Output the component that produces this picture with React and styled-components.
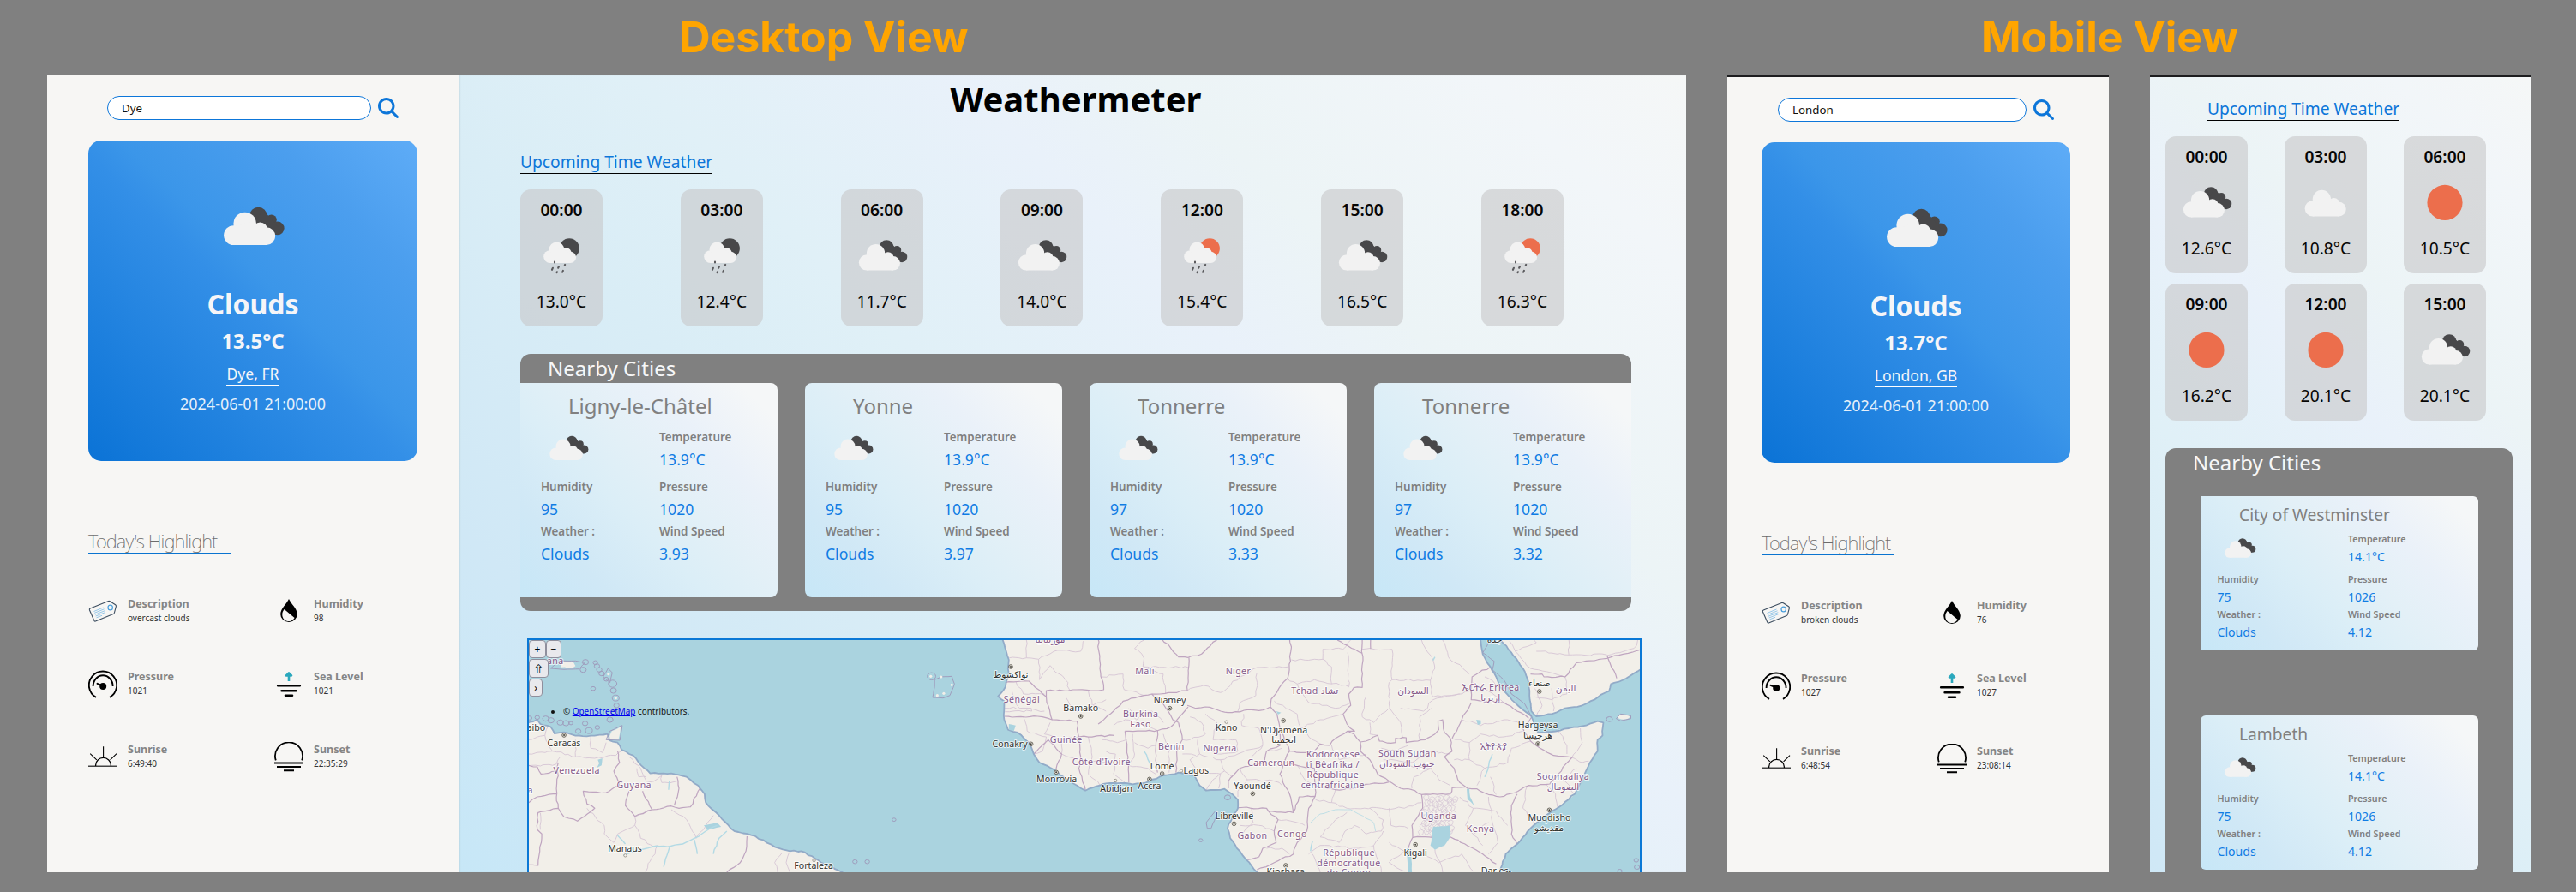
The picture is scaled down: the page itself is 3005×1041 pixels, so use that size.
import React from 'react';
import styled, { createGlobalStyle, css } from 'styled-components';
import { FaMagnifyingGlass } from 'react-icons/fa6';

const blue = '#0d76d9';
const sans = "'Noto Sans', 'Open Sans', 'DejaVu Sans', sans-serif";

const GlobalStyle = createGlobalStyle`
  * { box-sizing: border-box; }
  body { margin: 0; background: #808080; font-family: ${sans}; }
  h1, h2, h3, p { margin: 0; font-weight: 400; }
`;

const Board = styled.div`
  width: 3005px;
  height: 1041px;
  background: #808080;
  overflow: hidden;
`;

const HeadingRow = styled.header`
  display: grid;
  grid-template-columns: 1912px 1088px;
  padding-left: 5px;
  height: 88px;
`;

const ViewHeading = styled.h1`
  font: 700 50px/86px Inter, sans-serif;
  color: #ffa500;
  text-align: center;
  white-space: nowrap;
`;

const Screens = styled.div`
  display: flex;
  height: 930px;
  padding-left: 55px;
`;

const DesktopScreen = styled.section`
  display: flex;
  width: 1912px;
  height: 930px;
  overflow: hidden;
`;

const MobileScreen = styled.section`
  width: 445px;
  height: 930px;
  margin-left: 48px;
  overflow: hidden;
  border-top: 2px solid #1d1d1f;
`;

const Sidebar = styled.aside`
  width: ${(p) => (p.$mobile ? 445 : 480)}px;
  height: 930px;
  padding: 24px ${(p) => (p.$mobile ? '45px 0 40px' : '48px 0')};
  background: #f7f6f4;
  flex: none;
`;

const SearchBar = styled.div`
  display: flex;
  align-items: center;
  gap: 8px;
  height: 28px;
  padding-left: ${(p) => (p.$mobile ? 19 : 22)}px;
  color: ${blue};
  font-size: 24px;
`;

const SearchBox = styled.div`
  width: ${(p) => (p.$mobile ? 290 : 308)}px;
  height: 28px;
  padding-left: 16px;
  border: 1px solid ${blue};
  border-radius: 14px;
  background: #fff;
  color: #111;
  font-size: 13.3px;
  line-height: 26px;
`;

const CurrentCard = styled.div`
  display: flex;
  flex-direction: column;
  align-items: center;
  height: 374px;
  margin-top: 24px;
  padding-top: 50px;
  border-radius: 15px;
  color: #f5f5f8;
  background: linear-gradient(to top right, #0b73d6, #338fe7 48%, #3b96e9 55%, #4b9eee 78%, #5eacf7);
`;

const Condition = styled.p`
  margin-top: 19px;
  font-size: 32px;
  font-weight: 700;
  line-height: 43px;
`;

const Temperature = styled.p`
  margin-top: 5px;
  font-size: 24px;
  font-weight: 700;
  line-height: 33px;
`;

const Place = styled.p`
  margin-top: 10px;
  padding-bottom: 1px;
  font-size: 17.6px;
  line-height: 24px;
  border-bottom: 1px solid #fff;
`;

const Stamp = styled.p`
  margin-top: 9px;
  font-size: 18px;
  line-height: 24px;
  color: #e6f0fa;
`;

const HighlightTitle = styled.h2`
  width: ${(p) => (p.$mobile ? 155 : 167)}px;
  height: 30px;
  margin-top: 78px;
  border-bottom: 1px solid #0a74d0;
  color: #6c6c6c;
  font-size: 22px;
  font-weight: 200;
  letter-spacing: -0.9px;
  line-height: 30px;
  white-space: nowrap;
`;

const HighlightGrid = styled.div`
  display: grid;
  grid-template-columns: ${(p) => (p.$mobile ? 205 : 217)}px 1fr;
  row-gap: 51px;
  margin-top: 50px;
`;

const Highlight = styled.div`
  display: flex;
  gap: 12px;
  height: 34px;
  white-space: nowrap;
`;

const HighlightLabel = styled.p`
  color: #858585;
  font-size: 12.5px;
  font-weight: 700;
  line-height: 17px;
`;

const HighlightValue = styled.p`
  margin-top: 1px;
  color: #333;
  font-size: 10px;
  line-height: 14px;
`;

const skyStops = '#c7e7f7, #d0e8f6 17%, #d9edf6 36%, #e0f0f7 48%, #e9f1fa 64%, #ecf4f6 74%, #f2f6f9 90%, #f5f7f7';

const Main = styled.main`
  flex: 1;
  height: 930px;
  padding-left: 72px;
  background: linear-gradient(45deg, ${skyStops});
  box-shadow: inset 2px 0 2px -1px #a9bdc6;
`;

const MobileMain = styled.main`
  height: 930px;
  padding: 23px 22px 0 18px;
  background: linear-gradient(45deg, ${skyStops}) 0 0 / 100% 1170px no-repeat;
`;

const AppTitle = styled.h1`
  padding-right: 64px;
  text-align: center;
  font-size: 40px;
  font-weight: 700;
  line-height: 55px;
  height: 54px;
`;

const UpcomingTitle = styled.h2`
  width: max-content;
  margin: ${(p) => (p.$mobile ? '0 0 18px 49px' : '33px 0 18px')};
  border-bottom: 1px solid #000;
  color: ${blue};
  font-size: 19.2px;
  line-height: 27px;
`;

const Hours = styled.div`
  display: grid;
  grid-template-columns: repeat(${(p) => (p.$mobile ? 3 : 7)}, 96px);
  justify-content: space-between;
  row-gap: 12px;
  width: ${(p) => (p.$mobile ? 374 : 1217)}px;
`;

const HourCard = styled.div`
  display: flex;
  flex-direction: column;
  align-items: center;
  height: 160px;
  padding-top: 10px;
  border-radius: 12px;
  background: rgba(200, 200, 201, 0.62);
  font-size: 19.2px;
  line-height: 27px;
  color: #060606;
`;

const HourTime = styled.p`
  font-weight: 600;
`;

const Nearby = styled.section`
  width: ${(p) => (p.$mobile ? 405 : 1296)}px;
  height: ${(p) => (p.$mobile ? 620 : 300)}px;
  margin-top: 32px;
  border-radius: 12px;
  background: #808080;
`;

const NearbyTitle = styled.h2`
  height: 34px;
  padding-left: 32px;
  color: #f7f7f7;
  font-size: 24px;
  line-height: 33px;
`;

const Cities = styled.div`
  display: flex;
  gap: 32px;
  ${(p) =>
    p.$mobile &&
    css`
      flex-direction: column;
      gap: 76px;
      padding: 22px 40px 0 41px;
    `}
`;

const CityCard = styled.article`
  flex: none;
  width: ${(p) => (p.$mobile ? 324 : 300)}px;
  height: ${(p) => (p.$mobile ? 180 : 250)}px;
  padding: ${(p) => (p.$mobile ? '8px 0 0 19.5px' : '10px 0 0 24px')};
  border-radius: ${(p) => p.$radius};
  background: linear-gradient(45deg, #c7e7f7, #d0e8f6 20%, #dbeef7 40%, #e3f0f7 56%, #eaf1f9 72%, #f5f7f8 92%);
`;

const CityName = styled.h3`
  padding-left: ${(p) => (p.$mobile ? 25.5 : 32)}px;
  color: #808080;
  font-size: ${(p) => (p.$mobile ? 19.2 : 24)}px;
  line-height: ${(p) => (p.$mobile ? 27 : 33)}px;
  height: ${(p) => (p.$mobile ? 27 : 34)}px;
`;

const CityGrid = styled.div`
  display: grid;
  grid-template-columns: ${(p) => (p.$mobile ? 152.5 : 138)}px 1fr;
  grid-template-rows: 6.3em 4.8em 4.8em;
  row-gap: 0.4em;
  align-items: start;
  font-size: ${(p) => (p.$mobile ? 8 : 10)}px;
`;

const MetricCell = styled.div`
  padding-top: ${(p) => (p.$lowered ? '0.9em' : 0)};
`;

const MetricLabel = styled.p`
  color: #808080;
  font-size: 1.34em;
  font-weight: 600;
  line-height: calc(20em / 13.4);
`;

const MetricValue = styled.p`
  margin-top: calc(4em / 17.6);
  color: #107ce4;
  font-size: 1.76em;
  line-height: calc(24em / 17.6);
`;

const MapFrame = styled.div`
  position: relative;
  width: 1300px;
  height: 400px;
  margin: 32px 0 0 8px;
  border: 2px solid #0a78d6;
  background: #aad3df;
  overflow: hidden;
`;

const MapControls = styled.div`
  position: absolute;
  left: 0;
  top: 0;
  display: flex;
  flex-wrap: wrap;
  align-content: flex-start;
  width: 38px;
  row-gap: 1px;
`;

const MapButton = styled.button`
  width: ${(p) => p.$w}px;
  height: ${(p) => p.$h}px;
  margin-right: ${(p) => p.$gap || 0}px;
  padding: 0;
  border: 1px solid #8f8f9d;
  border-radius: 4px;
  background: #e9e9ed;
  color: #000;
  font: ${(p) => p.$size || 12}px/16px ${sans};
`;

const Attribution = styled.ul`
  position: absolute;
  left: 40px;
  top: 76px;
  margin: 0;
  padding: 0;
  color: #111;
  font-size: 9.9px;
  line-height: 14px;
  white-space: nowrap;
  a { color: #0000ee; }
`;

const MapSvg = styled.svg`
  display: block;
  text {
    font-family: 'Noto Sans', 'DejaVu Sans', 'Noto Sans Ethiopic', sans-serif;
    text-anchor: middle;
    paint-order: stroke;
    stroke: rgba(255, 255, 255, 0.7);
    stroke-width: 2px;
    stroke-linejoin: round;
  }
`;

/* ---------- weather icons ---------- */

const WhiteCloud = () => (
  <g fill="#f2f2f2">
    <circle cx="27.5" cy="60.6" r="11.4" />
    <circle cx="40.7" cy="47" r="13.3" />
    <circle cx="58.5" cy="54" r="8.6" />
    <circle cx="65.8" cy="61.6" r="10.4" />
    <path d="M27.5 72H66V58L50 44L30 50Z" />
  </g>
);

const RainCloud = ({ disc }) => (
  <>
    <circle cx="61.5" cy="40" r="14.6" fill={disc} />
    <g fill="#f2f2f2">
      <circle cx="33.3" cy="52" r="9.3" />
      <circle cx="43" cy="41.5" r="11" />
      <circle cx="57" cy="46.5" r="7.5" />
      <circle cx="63" cy="53" r="8.3" />
      <path d="M33 61.2H63V48L50 38L34 46Z" />
    </g>
    <g stroke="#5a5a5d" strokeWidth="2.6" strokeLinecap="round">
      <path d="M40 59.5v1.2M55.2 63.6l-.5 1.2M46.2 66.2l-1 2.2M37.4 68.4l-1.2 2.6M52.4 72.4l-1 2.2M43.6 74l-.4 1.2" />
    </g>
  </>
);

const WeatherIcon = ({ kind, size }) => (
  <svg width={size} height={size} viewBox="0 0 100 100">
    {kind === 'clouds' && (
      <>
        <g fill="#48484a">
          <circle cx="56.4" cy="38" r="10.3" />
          <circle cx="71.6" cy="42.6" r="6.2" />
          <circle cx="78.8" cy="52.4" r="7.8" />
          <path d="M62 31L72 42L80 52L78 60L50 48Z" />
        </g>
        <WhiteCloud />
      </>
    )}
    {kind === 'cloud' && (
      <g transform="translate(3.5 -1.5)">
        <WhiteCloud />
      </g>
    )}
    {kind === 'rainNight' && <RainCloud disc="#48484a" />}
    {kind === 'rainDay' && <RainCloud disc="#ec6e4c" />}
    {kind === 'sun' && <circle cx="50" cy="50.5" r="25.7" fill="#ec6e4c" />}
  </svg>
);

/* ---------- highlight icons, 34 x 34 ---------- */

const TagIcon = () => (
  <svg width="34" height="34" viewBox="0 0 34 34" fill="none">
    <path d="M1.4 15.8Q1 14.6 2.2 14.1L23.5 5.5Q24.5 5.2 25.4 5.8L31.6 9.8Q32.6 10.6 32.4 11.6L30.4 19.2Q30.1 20.2 29.2 20.6L8.4 29Q7.2 29.4 6.8 28.2Z" stroke="#3d4e60" strokeWidth="1.1" />
    <ellipse cx="25.7" cy="13" rx="2.7" ry="2.9" stroke="#4a9fdc" strokeWidth="1.2" />
    <path d="M6.5 17.5L17.5 13M7.2 19.3L18.5 14.8M8 21.2L19.3 16.7M8.7 23L20 18.5M9.5 24.8L16 22.3" stroke="#7ebbe6" strokeWidth=".8" />
  </svg>
);

const DropIcon = () => (
  <svg width="34" height="34" viewBox="0 0 34 34">
    <path d="M17 3C14.5 8.5 7.2 14.5 7.2 20.7A9.8 9.4 0 0 0 26.8 20.7C26.8 14.5 19.5 8.5 17 3Z" />
    <path d="M11.6 14.9L23.6 25A7.6 7.4 0 0 1 9.3 20.7C9.3 18.6 10.3 16.8 11.6 14.9Z" fill="#f7f6f4" />
  </svg>
);

const GaugeIcon = () => (
  <svg width="34" height="34" viewBox="0 0 34 34" fill="none" stroke="#000">
    <path d="M9 32.8A16.2 16.2 0 1 1 25 32.8" strokeWidth="1.9" />
    <path d="M5.6 20A11.4 12.6 0 1 1 28.6 20" strokeWidth="1.9" />
    <circle cx="17.2" cy="20" r="4" fill="#000" stroke="none" />
    <path d="M10.5 16.8L17 19.5" strokeWidth="2" strokeLinecap="round" />
  </svg>
);

const SeaIcon = () => (
  <svg width="34" height="34" viewBox="0 0 34 34" strokeLinecap="round">
    <path d="M17 14V5M14 7.4L17 4.4L20 7.4Z" stroke="#2ba8bd" strokeWidth="2.6" fill="#2ba8bd" strokeLinejoin="round" strokeLinecap="butt" />
    <path d="M4.2 19.3H29.8M8.6 25.2H25.4M13 30.7H21" stroke="#000" strokeWidth="2.6" />
  </svg>
);

const SunriseIcon = () => (
  <svg width="34" height="34" viewBox="0 0 34 34" fill="none" stroke="#000">
    <path d="M0 28.3H34" strokeWidth="1.6" stroke="#444" />
    <path d="M8.6 28V27A8.9 8.6 0 0 1 26.4 27V28" strokeWidth="1.3" />
    <path d="M17.6 5.3V18M2.2 13.6L9.8 20.8M33 13.6L25.6 20.8" strokeWidth="1.1" />
  </svg>
);

const SunsetIcon = () => (
  <svg width="34" height="35" viewBox="0 0 34 35" fill="none" stroke="#000" strokeWidth="1.8">
    <path d="M1.8 21.4A16 16 0 1 1 32.2 21.4" />
    <path d="M0 24.6H34M3 29H31M11 33.2H23" strokeWidth="2" />
  </svg>
);

const highlightIcons = [TagIcon, DropIcon, GaugeIcon, SeaIcon, SunriseIcon, SunsetIcon];
const highlightLabels = ['Description', 'Humidity', 'Pressure', 'Sea Level', 'Sunrise', 'Sunset'];

/* ---------- map ---------- */

// The map is kept as two sheets, Atlantic (W) and Africa (E), sharing one scale.
const sheets = { W: -17, E: 673 };
const SX = 1 / 2.24;
const SY = 1 / 3;
const px = (sheet, x, y) => [x * SX + sheets[sheet], y * SY - 17];

const parse = (sheet, str) => {
  const n = str.trim().split(/[\s,]+/).map(Number);
  const out = [];
  for (let i = 0; i < n.length; i += 2) out.push(px(sheet, n[i], n[i + 1]));
  return out;
};

// Subdivides each segment and nudges the midpoints for a natural boundary.
const rough = (pts, amount, closed) => {
  let seed = Math.round(pts[0][0] * 7 + pts[0][1] * 13) + 1;
  const rnd = () => {
    seed = (seed * 16807 + 11) % 2147483647;
    return (seed % 1000) / 1000 - 0.5;
  };
  let d = `M${pts[0][0].toFixed(1)} ${pts[0][1].toFixed(1)}`;
  for (let i = 1; i < pts.length; i++) {
    const [x0, y0] = pts[i - 1];
    const [x1, y1] = pts[i];
    const len = Math.hypot(x1 - x0, y1 - y0);
    const steps = Math.max(1, Math.round(len / 5));
    for (let s = 1; s < steps; s++) {
      const t = s / steps;
      d += `L${(x0 + (x1 - x0) * t + rnd() * amount).toFixed(1)} ${(y0 + (y1 - y0) * t + rnd() * amount).toFixed(1)}`;
    }
    d += `L${x1.toFixed(1)} ${y1.toFixed(1)}`;
  }
  return d + (closed ? 'Z' : '');
};

const saCoast = '30 345 60 330 68 345 95 355 105 378 130 374 160 386 200 386 243 380 248 402 270 410 280 435 310 455 325 480 355 518 410 518 450 530 480 560 497 590 500 620 535 665 575 720 630 738 680 775 720 790 750 790 785 815 810 835 857 864 870 880';
const waCoast = '1272 40 1285 90 1292 120 1290 180 1283 215 1264 248 1280 265 1280 330 1290 365 1315 375 1345 410 1357 450 1372 480 1410 505 1435 530 1470 560 1492 578 1530 560 1546 553';
const gulfCoast = '0 553 40 552 70 556 100 552 140 530 190 515 230 525 245 560 262 578 310 572 330 590 345 610 345 640 330 675 318 710 325 745 350 790 375 830 395 864 400 880';
const eastCoast = '1030 880 1032 850 1045 800 1075 765 1110 710 1150 665 1185 635 1225 590 1245 540 1265 480 1285 440 1285 400 1298 385 1300 340 1285 335 1255 350 1210 360 1165 372 1130 375 1120 350 1112 318 1085 290 1055 250 1030 215 1020 180 1005 145 985 100 978 40';
const arabia = '1025 40 1060 95 1090 150 1105 200 1108 260 1112 300 1125 318 1165 310 1200 290 1245 280 1315 230 1320 205 1360 185 1400 152';

const nations = [
  ['E', '145 45 170 80 190 110 215 112 250 100 290 51'],
  ['E', '217 112 213 228 175 235 120 240 100 245 45 265 20 300 -20 345'],
  ['E', '120 240 150 275 175 330 190 340'],
  ['E', '213 280 235 290 260 285 300 300 330 305 370 295 400 298 430 285'],
  ['E', '480 45 485 75 475 185 432 258 430 285 447 310'],
  ['E', '605 51 670 97'],
  ['E', '670 45 670 217 648 218 635 240 640 280 620 310 630 345 650 370 632 370 600 395 585 420 560 415 545 440 510 445 480 440'],
  ['E', '632 370 648 380 665 408'],
  ['E', '692 45 692 82'],
  ['E', '665 408 690 400 710 385 715 405 745 412 757 410 757 395 785 393 785 410 815 405 835 400 860 380 870 365 868 335 880 330 885 375 900 395 905 440'],
  ['E', '665 408 665 440 690 470 710 520 740 545 770 570 800 575 825 592 900 590 905 568 940 565'],
  ['E', '905 440 885 460 910 500 925 550 945 570 970 572 1000 592 1030 600 1070 585 1105 560 1160 555 1218 462 1170 455 1135 430 1110 405 1090 360 1112 322'],
  ['E', '1005 145 975 165 957 180 955 260 1040 270 1075 300 1105 325'],
  ['E', '955 270 930 330 905 395'],
  ['E', '1075 590 1060 630 1060 730 1075 765'],
  ['E', '802 742 900 740 985 800 1020 835'],
  ['E', '825 592 828 640 800 700 802 742 790 780 795 870'],
  ['E', '447 310 455 360 455 420 420 440 415 480 350 500 320 545 320 570'],
  ['E', '455 360 480 440 465 480 455 520 480 590 490 655 425 650 420 640 345 638'],
  ['E', '490 655 505 600 547 598 530 640 525 720 500 760 490 800 440 830 395 855'],
  ['E', '425 650 450 680 440 720 445 760 410 780 400 810 370 820'],
  ['E', '465 480 500 490 545 500 548 560 600 575 640 572 690 555 740 548'],
  ['E', '548 560 547 598'],
  ['E', '135 368 130 440 135 515'],
  ['E', '190 340 200 400 185 440 183 515'],
  ['E', '50 370 55 430 60 550'],
  ['E', '50 370 135 368 170 355 215 285'],
  ['E', '1110 170 1140 170 1145 180 1200 180 1230 130 1310 115 1397 85'],
  ['E', '1310 105 1335 185'],
  ['W', '1525 45 1530 150 1540 225 1390 228 1390 250 1345 195 1283 200'],
  ['W', '1390 250 1405 330 1380 320 1280 318'],
  ['W', '1405 330 1470 335 1475 390 1568 385'],
  ['W', '1475 390 1480 460 1475 500 1492 578'],
  ['W', '1357 450 1395 400 1430 450 1415 505'],
  ['W', '38 490 60 495 70 520 110 510'],
  ['W', '270 440 275 480 260 510 275 560 240 585 180 580 190 625 210 640 165 685 130 670 115 640 62 655 60 715 72 730 62 840 38 838'],
  ['W', '115 640 110 600 115 480'],
  ['W', '300 580 290 630 315 668 360 645 335 580'],
  ['W', '360 645 410 632 430 640 460 635 485 570'],
  ['W', '425 530 430 570 418 630'],
  ['W', '38 620 60 600 110 590'],
  ['W', '608 738 605 790 590 830 555 864'],
];

const regions = [
  ['W', '38 400 80 385 100 440 160 460 160 400'],
  ['W', '80 385 90 350'],
  ['W', '160 460 210 465 265 455 280 440'],
  ['W', '200 388 200 430 230 445 240 410'],
  ['W', '38 450 100 440'],
  ['W', '45 490 110 485 120 460'],
  ['W', '315 700 315 670 350 650'],
  ['W', '315 700 270 730 260 760 235 730 235 700 190 640'],
  ['W', '315 700 330 745 365 775 375 770 343 864'],
  ['W', '410 645 450 680 475 745 520 665'],
  ['W', '68 715 68 657'],
  ['W', '718 795 710 830 720 864'],
  ['W', '700 795 680 830 688 864'],
  ['W', '300 460 330 500 345 545 365 545 385 525 385 550 425 545'],
  ['W', '320 500 325 530 345 530'],
  ['W', '1338 51 1338 113 1293 113'],
  ['W', '1338 113 1370 118 1410 90 1480 90 1493 45'],
  ['W', '1370 118 1372 190 1400 140 1440 190 1452 228'],
  ['W', '1310 195 1330 240 1385 240'],
  ['W', '1300 230 1320 290 1385 300'],
  ['W', '1330 320 1340 370 1390 390 1380 440 1357 450'],
  ['W', '1400 340 1385 380 1430 400 1475 390'],
  ['W', '1430 400 1430 450 1470 470'],
  ['W', '1280 290 1350 290 1352 300 1282 302'],
  ['W', '1500 390 1510 460 1500 520 1530 560'],
  ['W', '1440 250 1460 300 1520 280 1546 300'],
  ['W', '1480 470 1546 480'],
  ['W', '1500 230 1510 280 1546 260'],
  ['E', '100 51 75 80 100 115 97 145 217 147'],
  ['E', '97 145 150 170 155 240'],
  ['E', '-10 180 45 170 48 225 100 245'],
  ['E', '475 145 395 147 350 180 300 235 255 210 213 228'],
  ['E', '395 165 392 245 350 270 345 300'],
  ['E', '485 120 567 118 567 83 620 83 640 51'],
  ['E', '475 185 500 205 545 190 635 215 632 95'],
  ['E', '567 118 590 145 590 205'],
  ['E', '500 205 530 270 600 290 640 270'],
  ['E', '440 265 500 310 510 360 560 330 620 310'],
  ['E', '670 83 748 83 748 190 848 192 860 150 855 120 825 51'],
  ['E', '748 190 740 200 742 290 770 340 775 390'],
  ['E', '848 192 855 250 910 245 950 230'],
  ['E', '770 290 830 300 855 260 925 240'],
  ['E', '680 250 670 320 700 340 740 290'],
  ['E', '690 340 690 380 710 385'],
  ['E', '820 400 820 320 850 290'],
  ['E', '880 51 895 110 950 170'],
  ['E', '220 320 250 340 260 380 220 400 200 400'],
  ['E', '260 310 290 340 280 400 340 400 345 440 290 450 270 430'],
  ['E', '360 310 355 350 400 360 410 420 380 460'],
  ['E', '240 400 245 450 220 470 240 510 225 525'],
  ['E', '245 450 300 470 310 510 280 540 262 578'],
  ['E', '300 470 345 450 410 420'],
  ['E', '310 510 330 530'],
  ['E', '200 450 235 455'],
  ['E', '240 510 300 520 295 570'],
  ['E', '350 500 370 540 345 580 345 600'],
  ['E', '370 540 440 545 460 560'],
  ['E', '420 440 460 430'],
  ['E', '70 380 75 450 60 490 110 500 130 520'],
  ['E', '75 410 110 430 130 420'],
  ['E', '20 350 50 330 90 345 135 368'],
  ['E', '60 290 80 330 120 300 150 340'],
  ['E', '150 380 165 420 165 515'],
  ['E', '-10 400 30 410 55 400'],
  ['E', '0 440 25 450 20 520 50 550'],
  ['E', '520 370 540 400 560 415'],
  ['E', '590 420 610 470 680 450'],
  ['E', '500 490 520 540 548 560'],
  ['E', '600 575 590 620 630 640 720 640 780 640 825 620'],
  ['E', '590 620 548 610'],
  ['E', '630 655 600 680 560 740 610 760 625 720 650 700 680 730 720 720 725 680 690 640'],
  ['E', '725 720 700 770 650 780 560 770 530 800'],
  ['E', '740 640 745 700 790 710'],
  ['E', '740 760 780 790 740 830 780 860'],
  ['E', '725 470 800 480 850 440 900 450'],
  ['E', '720 430 760 440 790 420'],
  ['E', '770 490 850 500 870 540 900 560'],
  ['E', '800 570 805 530 850 500'],
  ['E', '905 395 950 410 980 380 1040 390 1090 370'],
  ['E', '930 330 980 350 1040 330 1085 345'],
  ['E', '950 410 950 470 990 500 970 560'],
  ['E', '990 500 1050 480 1060 430 1110 405'],
  ['E', '910 470 950 470'],
  ['E', '1005 530 1020 592'],
  ['E', '960 200 1000 230 1040 270'],
  ['E', '990 180 1030 215'],
  ['E', '1055 55 1070 90 1125 60 1115 45'],
  ['E', '1070 90 1110 150 1200 180'],
  ['E', '1210 103 1310 103'],
  ['E', '1210 51 1210 103 1125 90'],
  ['E', '1310 105 1380 80 1390 51'],
  ['E', '1200 180 1205 240 1165 260 1120 250'],
  ['E', '1165 220 1170 300'],
  ['E', '1120 220 1140 280 1125 318'],
  ['E', '1180 365 1205 420 1205 450'],
  ['E', '1240 360 1245 410 1218 462'],
  ['E', '1218 462 1245 480 1262 475'],
  ['E', '1150 555 1175 590 1180 635'],
  ['E', '1100 565 1090 640 1120 690'],
  ['E', '1230 500 1195 540 1225 590'],
  ['E', '925 600 960 640 940 700 985 770'],
  ['E', '960 640 1020 650 1050 700'],
  ['E', '1000 600 1010 690 1025 760 1000 800'],
  ['E', '1000 690 960 730'],
  ['E', '860 785 880 864'],
  ['E', '830 800 870 830 930 800 960 860'],
  ['E', '350 700 400 700 440 720'],
  ['E', '380 640 385 690 350 740'],
  ['E', '450 680 500 690 520 700'],
  ['E', '420 780 460 780 480 800'],
  ['E', '540 800 560 864'],
  ['E', '700 770 720 864'],
];

const ugandaCells = [];
for (let r = 0; r < 8; r++) {
  for (let c = 0; c < 7; c++) {
    ugandaCells.push([830 + c * 12 - r * 2 + ((r * 5 + c * 3) % 7), 600 + r * 17 + ((c * 7 + r * 3) % 9)]);
  }
}

const islandsW = [
  [186, 128, 8], [180, 155, 8], [212, 130, 6], [216, 142, 7], [222, 155, 7], [228, 168, 7], [240, 188, 6], [257, 204, 11], [206, 221, 6],
  [259, 228, 8], [265, 254, 9], [267, 280, 7], [262, 305, 8], [250, 330, 8], [60, 322, 6], [82, 326, 8], [96, 332, 8], [120, 340, 8],
  [135, 342, 8], [148, 342, 5], [185, 343, 7], [167, 370, 7], [195, 368, 9], [217, 357, 6], [1090, 178, 11], [992, 680, 5], [890, 827, 6],
  [922, 827, 6], [298, 300, 5], [40, 324, 6],
];
const islandsE = [[318, 602, 8], [248, 752, 5], [1316, 328, 8], [1386, 822, 6], [1388, 846, 7], [1343, 860, 6]];

const places = [
  ['W', 107, 134, 'ana', 1], ['W', 163, 518, 'Venezuela', 1], ['W', 313, 569, 'Guyana', 1], ['W', 42, 588, 'a', 1],
  ['W', 1326, 270, 'Sénégal', 1], ['W', 1442, 412, 'Guinée', 1], ['W', 1534, 489, "Côte d'Ivoire", 1], ['W', 1400, 60, 'موريتانيا', 1],
  ['W', 57, 368, 'aibo'], ['W', 130, 422, 'Caracas'], ['W', 289, 793, 'Manaus'], ['W', 782, 853, 'Fortaleza'],
  ['W', 1297, 182, 'نواكشوط'], ['W', 1480, 300, 'Bamako'], ['W', 1295, 425, 'Conakry'], ['W', 1417, 550, 'Monrovia'], ['W', 1573, 583, 'Abidjan'],
  ['E', 102, 170, 'Mali', 1], ['E', 346, 170, 'Niger', 1], ['E', 91, 321, 'Burkina', 1], ['E', 91, 357, 'Faso', 1],
  ['E', 171, 435, 'Bénin', 1], ['E', 298, 442, 'Nigeria', 1], ['E', 546, 239, 'Tchad تشاد', 1], ['E', 803, 240, 'السودان', 1],
  ['E', 1006, 229, 'ኤርትራ Eritrea', 1], ['E', 1005, 265, 'إرتريا', 1], ['E', 1202, 231, 'اليمن', 1], ['E', 1013, 436, 'ኢትዮጵያ', 1],
  ['E', 594, 461, 'Ködörösêse', 1], ['E', 593, 497, 'tî Bêafrîka /', 1], ['E', 593, 533, 'République', 1], ['E', 593, 570, 'centrafricaine', 1],
  ['E', 788, 459, 'South Sudan', 1], ['E', 787, 495, 'جنوب السودان', 1], ['E', 432, 492, 'Cameroun', 1],
  ['E', 1195, 541, 'Soomaaliya', 1], ['E', 1195, 577, 'الصومال', 1], ['E', 870, 677, 'Uganda', 1], ['E', 979, 724, 'Kenya', 1],
  ['E', 383, 746, 'Gabon', 1], ['E', 487, 741, 'Congo', 1], ['E', 635, 806, 'République', 1], ['E', 635, 842, 'démocratique', 1], ['E', 635, 876, 'du Congo', 1],
  ['E', 167, 272, 'Niamey'], ['E', 315, 368, 'Kano'], ['E', 465, 377, "N'Djaména"], ['E', 465, 410, 'انجمينا'],
  ['E', 1133, 213, 'صنعاء'], ['E', 1016, 60, 'جدة'], ['E', 1129, 361, 'Hargeysa'], ['E', 1129, 395, 'هرجيسا'],
  ['E', 147, 503, 'Lomé'], ['E', 236, 520, 'Lagos'], ['E', 114, 574, 'Accra'], ['E', 383, 572, 'Yaoundé'],
  ['E', 1159, 684, 'Muqdisho'], ['E', 1158, 720, 'مقديشو'], ['E', 809, 806, 'Kigali'], ['E', 336, 679, 'Libreville'],
  ['E', 470, 873, 'Kinshasa'], ['E', 1020, 870, 'Dar es-'],
];

const capitals = [
  ['E', 167, 290], ['E', 464, 333], ['E', 147, 519], ['E', 114, 538], ['E', 384, 589], ['E', 335, 694], ['E', 809, 767], ['E', 1133, 231],
  ['E', 1129, 414], ['E', 1159, 646], ['E', 470, 840], ['W', 1297, 144], ['W', 1480, 318], ['W', 1350, 415], ['W', 1416, 514], ['W', 130, 384],
];
const towns = [['E', 315, 338], ['E', 25, 543], ['E', 197, 509], ['W', 290, 805], ['W', 783, 822]];

const shape = (sheet, pts, amount = 1.4) => rough(parse(sheet, pts), amount, true);
const line = (sheet, pts, amount = 1.4) => rough(parse(sheet, pts), amount, false);

const WorldMap = () => (
  <MapSvg width="1296" height="396" viewBox="0 0 1296 396">
    <g fill="#f2efe9">
      <path d={shape('W', saCoast + ' 30 880')} />
      <path d={shape('W', waCoast + ' 1550 553 1550 40')} />
      <path d={shape('E', gulfCoast + ' ' + eastCoast + ' 0 40')} />
      <path d={shape('E', arabia + ' 1400 40')} />
      <path d={shape('W', '122 128 155 130 160 142 150 150 122 146')} />
      <path d={shape('W', '245 400 255 370 278 355 272 400')} />
      <ellipse cx={px('E', 1353, 320)[0]} cy={px('E', 1353, 320)[1]} rx="7" ry="3" />
    </g>
    <g fill="none" stroke="#d6c5d5" strokeWidth="0.9" strokeLinejoin="round">
      {regions.map(([s, p], i) => (
        <path key={i} d={line(s, p, 2.6)} />
      ))}
      {ugandaCells.map(([x, y], i) => {
        const [a, b] = px('E', x, y);
        return <path key={i} d={`M${a} ${b}l3 -3l3.5 2l-1 4l-3.5 1.5z`} strokeWidth="0.7" />;
      })}
    </g>
    <g fill="none" stroke="#bfa5c0" strokeWidth="1.2" strokeLinejoin="round">
      {nations.map(([s, p], i) => (
        <path key={i} d={line(s, p, 1.8)} />
      ))}
    </g>
    <g fill="none" stroke="#92abc8" strokeWidth="1.8" strokeLinejoin="round">
      <path d={line('W', saCoast)} />
      <path d={line('W', waCoast)} />
      <path d={line('E', gulfCoast)} />
      <path d={line('E', eastCoast)} />
      <path d={line('E', arabia)} />
    </g>
    <g fill="none" stroke="#9f9dbd" strokeWidth="1">
      <path d={shape('W', '1098 190 1115 180 1143 178 1150 205 1138 245 1120 254 1093 252 1098 215', 0.4)} />
      <path d={shape('W', '95 150 118 124 160 124 185 130 170 152 130 154', 0.4)} />
      <path d={shape('W', '232 180 245 150 256 165 250 200', 0.4)} />
      <path d={shape('W', '240 400 250 370 282 350 276 402', 0.4)} />
      <path d={shape('E', '265 710 262 690 286 650 292 655 275 710', 0.4)} />
      <path d={shape('E', '1334 326 1345 310 1372 316 1372 326 1345 334', 0.4)} />
      <path d={line('E', '1000 60 985 95 1015 125 1010 155 1040 190 1060 240 1095 275 1112 318', 0.8)} />
      {islandsW.map(([x, y, r], i) => {
        const [a, b] = px('W', x, y);
        return <ellipse key={i} cx={a} cy={b} rx={r * SX} ry={r * SX * 0.85} />;
      })}
      {islandsE.map(([x, y, r], i) => {
        const [a, b] = px('E', x, y);
        return <ellipse key={i} cx={a} cy={b} rx={r * SX} ry={r * SX * 0.8} />;
      })}
    </g>
    <g fill="#f2efe9">
      {[[1088, 178], [1115, 180], [1143, 208], [1122, 238], [1105, 245], [265, 254], [246, 170]].map(([x, y]) => {
        const [a, b] = px('W', x, y);
        return <circle key={x} cx={a} cy={b} r="1.6" />;
      })}
    </g>
    <g fill="#aad3df">
      <path d={shape('E', '855 705 900 700 900 740 885 770 860 785 848 770 852 730')} />
      <path d={shape('E', '943 572 950 572 952 600 962 630 945 608', 0.5)} />
      <path d={shape('E', '968 330 980 332 980 345 972 348', 0.5)} />
      <path d={shape('W', '218 470 230 465 228 490 216 498 222 482', 0.5)} />
      <path d={shape('W', '495 700 530 690 540 705 505 715', 0.5)} />
      <path d={shape('W', '1292 345 1310 350 1305 370 1292 365', 0.5)} />
      <path d={shape('E', '786 780 798 790 800 864 790 864', 0.5)} />
      <path d={shape('E', '445 300 458 305 450 312', 0.5)} />
    </g>
    <g fill="none" stroke="#b3dae5" strokeWidth="1.4">
      <path d={line('W', '530 700 500 720 470 745 440 765 400 775 370 772 330 785 285 805')} />
      <path d={line('W', '405 778 390 845')} />
      <path d={line('W', '555 720 535 745 520 800')} />
      <path d={line('W', '470 750 478 800')} />
      <path d={line('W', '290 765 270 735')} />
      <path d={line('W', '405 545 403 575')} />
      <path d={line('E', '535 690 560 660 600 645 640 645 700 690 705 720')} strokeWidth="0.8" />
      <path d={line('E', '540 755 535 790')} />
      <path d={line('E', '100 440 120 500')} />
      <path d={line('E', '1010 450 990 530')} />
      <path d={line('E', '860 110 855 122')} />
    </g>
    {capitals.map(([s, x, y]) => {
      const [a, b] = px(s, x, y);
      return (
        <g key={x + s}>
          <circle cx={a} cy={b} r="2.3" fill="#e9e5dc" stroke="#5b584f" strokeWidth="0.9" />
          <circle cx={a} cy={b} r="1" fill="#45433c" />
        </g>
      );
    })}
    {towns.map(([s, x, y]) => {
      const [a, b] = px(s, x, y);
      return <circle key={x + s} cx={a} cy={b} r="1.7" fill="#f6f3ee" stroke="#8b887f" strokeWidth="0.8" />;
    })}
    {places.map(([s, x, y, name, country]) => {
      const [a, b] = px(s, x, y);
      return (
        <text key={name + x + y} x={a} y={b} fontSize="10.6" letterSpacing={/[a-z]/.test(name) && country ? 0.4 : 0} fill={country ? '#84598a' : '#33332f'}>
          {name}
        </text>
      );
    })}
  </MapSvg>
);

/* ---------- composed parts ---------- */

const Side = ({ mobile, city, place, temp, values }) => (
  <Sidebar $mobile={mobile}>
    <SearchBar $mobile={mobile}>
      <SearchBox $mobile={mobile}>{city}</SearchBox>
      <FaMagnifyingGlass />
    </SearchBar>
    <CurrentCard>
      <WeatherIcon kind="clouds" size={100} />
      <Condition>Clouds</Condition>
      <Temperature>{temp}</Temperature>
      <Place>{place}</Place>
      <Stamp>2024-06-01 21:00:00</Stamp>
    </CurrentCard>
    <HighlightTitle $mobile={mobile}>Today's Highlight</HighlightTitle>
    <HighlightGrid $mobile={mobile}>
      {highlightLabels.map((label, i) => {
        const Icon = highlightIcons[i];
        return (
          <Highlight key={label}>
            <Icon />
            <div>
              <HighlightLabel>{label}</HighlightLabel>
              <HighlightValue>{values[i]}</HighlightValue>
            </div>
          </Highlight>
        );
      })}
    </HighlightGrid>
  </Sidebar>
);

const HourList = ({ mobile, hours }) => (
  <>
    <UpcomingTitle $mobile={mobile}>Upcoming Time Weather</UpcomingTitle>
    <Hours $mobile={mobile}>
      {hours.map(([time, kind, temp]) => (
        <HourCard key={time}>
          <HourTime>{time}</HourTime>
          <WeatherIcon kind={kind} size={80} />
          <p>{temp}</p>
        </HourCard>
      ))}
    </Hours>
  </>
);

const Metric = ({ label, value, lowered }) => (
  <MetricCell $lowered={lowered}>
    <MetricLabel>{label}</MetricLabel>
    <MetricValue>{value}</MetricValue>
  </MetricCell>
);

const cornerFor = (i, mobile) => {
  const r = mobile ? 6 : 8;
  if (i === 0) return `0 ${r}px ${r}px 0`;
  if (i === 3) return `${r}px 0 0 ${r}px`;
  return `${r}px`;
};

const CityList = ({ mobile, cities }) => (
  <Nearby $mobile={mobile}>
    <NearbyTitle>Nearby Cities</NearbyTitle>
    <Cities $mobile={mobile}>
      {cities.map(([name, temp, humidity, pressure, wind], i) => (
        <CityCard key={i} $mobile={mobile} $radius={cornerFor(i, mobile)}>
          <CityName $mobile={mobile}>{name}</CityName>
          <CityGrid $mobile={mobile}>
            <WeatherIcon kind="clouds" size={mobile ? 51.2 : 64} />
            <Metric lowered label="Temperature" value={temp} />
            <Metric label="Humidity" value={humidity} />
            <Metric label="Pressure" value={pressure} />
            <Metric label="Weather :" value="Clouds" />
            <Metric label="Wind Speed" value={wind} />
          </CityGrid>
        </CityCard>
      ))}
    </Cities>
  </Nearby>
);

const desktopHours = [
  ['00:00', 'rainNight', '13.0°C'],
  ['03:00', 'rainNight', '12.4°C'],
  ['06:00', 'clouds', '11.7°C'],
  ['09:00', 'clouds', '14.0°C'],
  ['12:00', 'rainDay', '15.4°C'],
  ['15:00', 'clouds', '16.5°C'],
  ['18:00', 'rainDay', '16.3°C'],
];

const mobileHours = [
  ['00:00', 'clouds', '12.6°C'],
  ['03:00', 'cloud', '10.8°C'],
  ['06:00', 'sun', '10.5°C'],
  ['09:00', 'sun', '16.2°C'],
  ['12:00', 'sun', '20.1°C'],
  ['15:00', 'clouds', '20.1°C'],
];

const desktopCities = [
  ['Ligny-le-Châtel', '13.9°C', 95, 1020, '3.93'],
  ['Yonne', '13.9°C', 95, 1020, '3.97'],
  ['Tonnerre', '13.9°C', 97, 1020, '3.33'],
  ['Tonnerre', '13.9°C', 97, 1020, '3.32'],
];

const mobileCities = [
  ['City of Westminster', '14.1°C', 75, 1026, '4.12'],
  ['Lambeth', '14.1°C', 75, 1026, '4.12'],
];

export default function App() {
  return (
    <Board>
      <GlobalStyle />
      <HeadingRow>
        <ViewHeading>Desktop View</ViewHeading>
        <ViewHeading as="h2">Mobile View</ViewHeading>
      </HeadingRow>
      <Screens>
        <DesktopScreen>
          <Side city="Dye" place="Dye, FR" temp="13.5°C" values={['overcast clouds', '98', '1021', '1021', '6:49:40', '22:35:29']} />
          <Main>
            <AppTitle>Weathermeter</AppTitle>
            <HourList hours={desktopHours} />
            <CityList cities={desktopCities} />
            <MapFrame>
              <WorldMap />
              <MapControls>
                <MapButton $w={20} $h={21}>+</MapButton>
                <MapButton $w={18} $h={21}>−</MapButton>
                <MapButton $w={23} $h={22} $gap={10} $size={15}>⇧</MapButton>
                <MapButton $w={16} $h={21}>›</MapButton>
              </MapControls>
              <Attribution>
                <li>
                  © <a href="#osm">OpenStreetMap</a> contributors.
                </li>
              </Attribution>
            </MapFrame>
          </Main>
        </DesktopScreen>
        <MobileScreen>
          <Side mobile city="London" place="London, GB" temp="13.7°C" values={['broken clouds', '76', '1027', '1027', '6:48:54', '23:08:14']} />
        </MobileScreen>
        <MobileScreen>
          <MobileMain>
            <HourList mobile hours={mobileHours} />
            <CityList mobile cities={mobileCities} />
          </MobileMain>
        </MobileScreen>
      </Screens>
    </Board>
  );
}
